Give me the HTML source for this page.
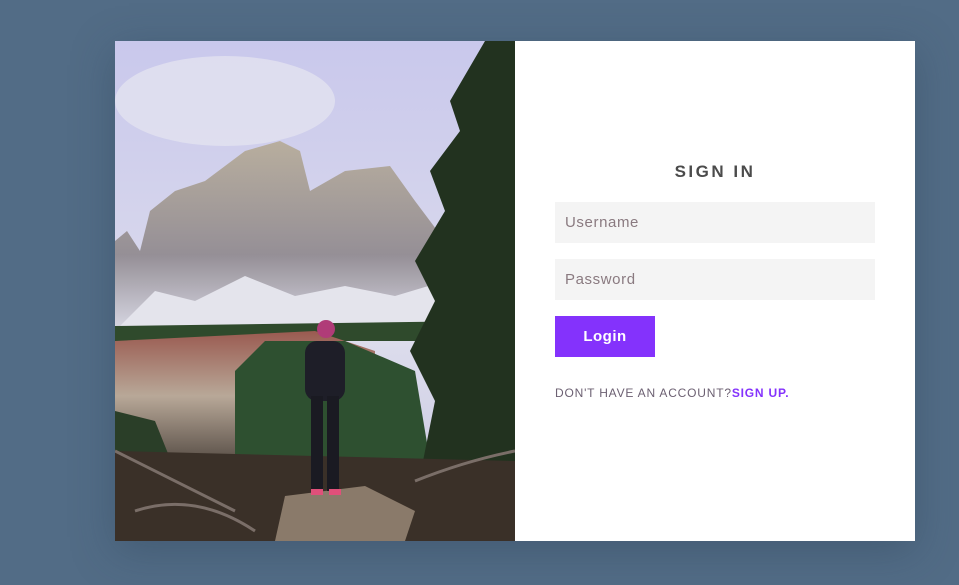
<!DOCTYPE html>
<html><head><meta charset="utf-8"><style>
html,body{margin:0;padding:0}
body{width:959px;height:585px;background:#526c86;position:relative;overflow:hidden;font-family:"Liberation Sans",sans-serif}
.card{position:absolute;left:115px;top:41px;width:800px;height:500px;background:#fff;box-shadow:0 10px 40px rgba(40,60,80,.35)}
.img{position:absolute;left:0;top:0;width:400px;height:500px}
h2{position:absolute;left:440px;width:320px;top:121px;margin:0;text-align:center;font-size:17px;letter-spacing:2.5px;color:#4b4b4b;font-weight:bold}
.in{position:absolute;left:440px;width:320px;height:41px;background:#f4f4f4;color:#8a7a80;font-size:15px;line-height:41px;box-sizing:border-box;padding-left:10px;letter-spacing:.6px}
.btn{position:absolute;left:440px;top:275px;width:100px;height:41px;background:#8432fc;color:#fff;font-weight:bold;font-size:15px;text-align:center;line-height:41px;letter-spacing:.5px}
.su{position:absolute;left:440px;top:345px;font-size:12px;color:#6c6072;letter-spacing:.8px}
.su b{color:#8432fc}
</style></head><body>
<div class="card">
<svg class="img" viewBox="0 0 400 500" xmlns="http://www.w3.org/2000/svg">
<defs><linearGradient id="sky" x1="0" y1="0" x2="0" y2="1"><stop offset="0" stop-color="#c9c8ec"/><stop offset=".6" stop-color="#dcdcec"/><stop offset="1" stop-color="#c8c7e0"/></linearGradient>
<linearGradient id="mt" x1="0" y1="0" x2="0" y2="1"><stop offset="0" stop-color="#b8ae9e"/><stop offset=".6" stop-color="#958f96"/><stop offset="1" stop-color="#d8d8e4"/></linearGradient>
<linearGradient id="sl" x1="0" y1="0" x2="0" y2="1"><stop offset="0" stop-color="#9a5a50"/><stop offset=".5" stop-color="#b8a898"/><stop offset="1" stop-color="#5a5048"/></linearGradient></defs>
<rect width="400" height="500" fill="url(#sky)"/>
<ellipse cx="110" cy="60" rx="110" ry="45" fill="#e2e2f0" opacity=".8"/>
<path d="M0 200 L12 190 L25 210 L35 170 L60 150 L90 140 L130 110 L165 100 L185 110 L195 150 L230 130 L275 125 L300 160 L330 200 L360 260 L365 290 L0 290Z" fill="url(#mt)"/>
<path d="M0 290 L40 250 L80 260 L130 235 L180 255 L230 245 L280 255 L330 240 L365 285 L0 300Z" fill="#e4e4ec"/>
<path d="M0 285 L370 280 L380 300 L0 300Z" fill="#2f4a2c"/>
<path d="M0 300 L200 290 L260 310 L260 420 L0 420Z" fill="url(#sl)"/>
<path d="M0 370 L40 380 L60 430 L0 440Z" fill="#2a3e28"/>
<path d="M120 330 L150 300 L230 300 L300 330 L320 450 L120 450Z" fill="#2e5030"/>
<path d="M370 0 L400 0 L400 460 L300 460 L320 360 L295 310 L320 260 L300 220 L330 170 L315 130 L345 90 L335 60Z" fill="#22321f"/>
<path d="M0 410 L400 420 L400 500 L0 500Z" fill="#3a3028"/>
<path d="M170 455 L250 445 L300 470 L290 500 L160 500Z" fill="#8a7a6a"/>
<path d="M0 410 Q60 440 120 470 M20 470 Q80 450 140 490 M300 440 Q350 420 400 410" stroke="#7a6e68" stroke-width="3" fill="none"/>
<rect x="190" y="300" width="40" height="60" rx="12" fill="#1e1e28"/>
<circle cx="211" cy="288" r="9" fill="#b03c78"/>
<rect x="196" y="355" width="12" height="95" fill="#1a1a22"/><rect x="212" y="355" width="12" height="95" fill="#1a1a22"/>
<rect x="196" y="448" width="12" height="6" fill="#e0507a"/><rect x="214" y="448" width="12" height="6" fill="#e0507a"/>
</svg>
<h2>SIGN IN</h2>
<div class="in" style="top:161px">Username</div>
<div class="in" style="top:218px">Password</div>
<div class="btn">Login</div>
<div class="su">DON'T HAVE AN ACCOUNT?<b>SIGN UP.</b></div>
</div>
</body></html>
